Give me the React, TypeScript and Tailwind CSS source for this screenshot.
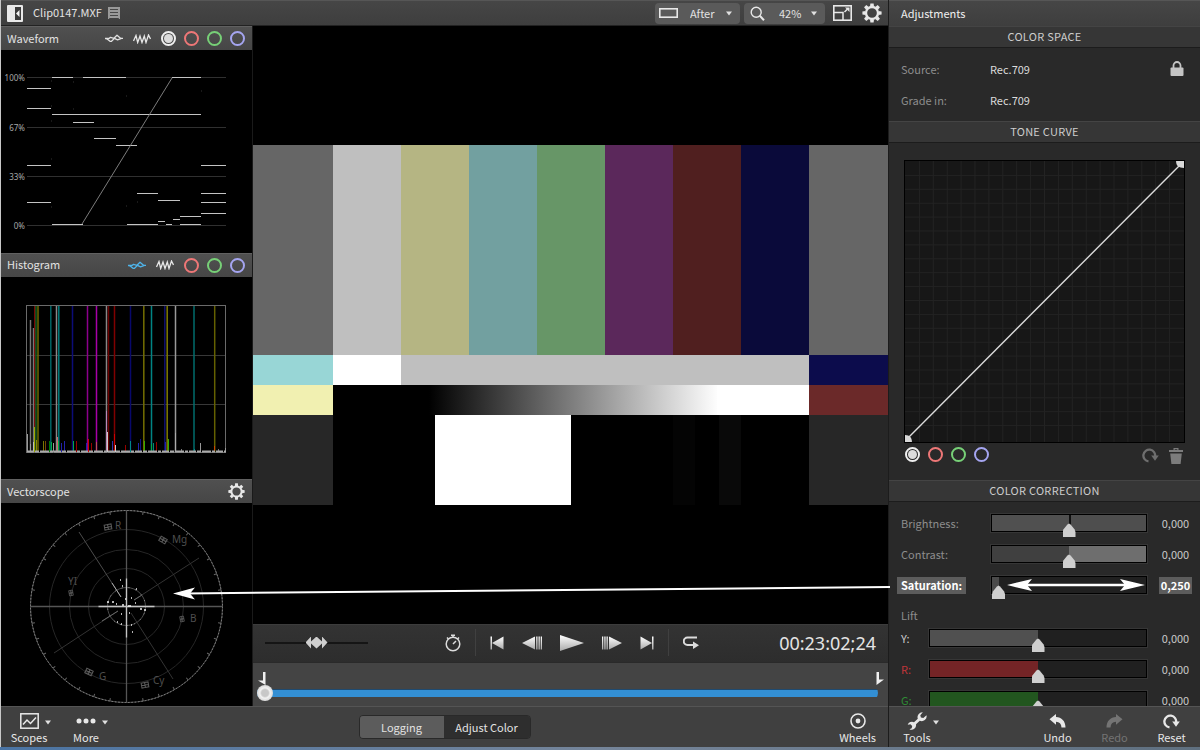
import React from "react";

type Rgb = "red" | "green" | "blue";

/* ---------- icons ---------- */

const PanelIcon = () => (
  <svg width="16" height="17" viewBox="0 0 16 17" aria-hidden="true">
    <rect width="16" height="17" rx="1" fill="#e9e9e9" />
    <rect x="8" y="2" width="6" height="13" fill="#3c3c3c" />
    <path d="M12.500 5v7L9 8.500z" fill="#f4f4f4" />
  </svg>
);

const ClipIcon = () => (
  <svg width="12" height="12" viewBox="0 0 12 12" aria-hidden="true">
    <path d="M0 0h12v12h-1.200v-1H1.200v1H0z" fill="#999" />
    <path d="M2 2.500h8M2 5.500h8M2 8.500h8" stroke="#484848" strokeWidth="1.200" />
  </svg>
);

const LoopIcon = ({ color }: { color: string }) => (
  <svg width="18" height="9" viewBox="0 0 18 9" aria-hidden="true" fill="none" stroke={color} strokeWidth="1.300" strokeLinejoin="round">
    <path d="M0 4.500H4L5.500 3.300L9 4.300L12 1.200L15.500 4.300H18" />
    <path d="M1.500 4.500L5 7.300H6.500L9.500 4.400L12.500 5.800L16.500 4.300" />
  </svg>
);

const ZigzagIcon = () => (
  <svg width="18" height="10" viewBox="0 0 18 10" aria-hidden="true">
    <path d="M0.500 7L3 1.500L4.700 8.500L7 2L9 8.500L11.300 2L13 8.500L15.500 1L17.500 5" fill="none" stroke="#e6e6e6" strokeWidth="1.300" />
  </svg>
);

const GearIcon = ({ size }: { size: number }) => (
  <svg width={size} height={size} viewBox="-10 -10 20 20" aria-hidden="true">
    <circle r="6" fill="none" stroke="#e8e8e8" strokeWidth="2.300" />
    {[0, 45, 90, 135, 180, 225, 270, 315].map((a) => (
      <path key={a} d="M-2 -6.500L-1.600 -9.600H1.600L2 -6.500z" fill="#e8e8e8" transform={`rotate(${a})`} />
    ))}
  </svg>
);

const Caret = () => (
  <svg width="6" height="5" viewBox="0 0 6 5" aria-hidden="true" className="pointer-events-none shrink-0">
    <path d="M0 0.500h6L3 4.500z" fill="#e0e0e0" />
  </svg>
);

const WrenchIcon = () => (
  <svg width="20" height="18" viewBox="0 0 20 18" aria-hidden="true">
    <path
      d="M15.800 0.300a4.900 4.900 0 0 0-5 6.500L7 10.200a4.600 4.600 0 0 0-6.300 2.600l2.700-.6 1.800 1.700-.5 2.300-2.200 1a4.600 4.600 0 0 0 6.500-5l3.800-3.400a4.900 4.900 0 0 0 6.700-5.500L16.300 6l-2.400-.5-.6-2.300z"
      fill="#e8e8e8"
    />
  </svg>
);

const UndoIcon = () => (
  <svg width="17" height="14" viewBox="0 0 17 14" aria-hidden="true">
    <path d="M7 0v3C12.500 3.200 16.500 7 16.500 13.500h-4C12.300 9.800 10.500 8 7 7.700v3.100L0.500 5.300z" fill="currentColor" />
  </svg>
);

const ResetIcon = () => (
  <svg width="17" height="15" viewBox="0 0 17 15" aria-hidden="true">
    <path d="M6.500 13.400A5.900 5.900 0 1 1 13.100 8.500" fill="none" stroke="currentColor" strokeWidth="2.300" />
    <path d="M9.200 7.500H16.800L13 12.800z" fill="currentColor" />
  </svg>
);

const TrashIcon = () => (
  <svg width="14" height="17" viewBox="0 0 14 17" aria-hidden="true">
    <path d="M0 3h14v2H0zM4.500 3.500V1h5v2.500H8.300V2.200H5.700v1.300zM1.200 6.500h11.600L11.600 17H2.400z" fill="#7c7c7c" />
  </svg>
);

const LockIcon = () => (
  <svg width="14" height="15" viewBox="0 0 14 15" aria-hidden="true">
    <path d="M3.500 7V4.500a3.500 3.500 0 0 1 7 0V7" fill="none" stroke="#c4c4c4" strokeWidth="1.800" />
    <rect x="0.500" y="6.500" width="13" height="8.500" rx="1" fill="#c4c4c4" />
  </svg>
);

const ringColor: Record<Rgb, string> = { red: "border-[#ee7777]", green: "border-[#77d077]", blue: "border-[#a5a5f0]" };

function Ring({ color }: { color: Rgb }) {
  return <button aria-label={`${color} channel`} className={`size-[15px] shrink-0 rounded-full border-2 ${ringColor[color]}`} />;
}

function LumaRing() {
  return (
    <button aria-label="luma channel" className="flex size-[15px] shrink-0 items-center justify-center rounded-full border-2 border-[#efefef]">
      <span className="size-[9px] rounded-full bg-[#dcdcdc]" />
    </button>
  );
}

/* ---------- scopes ---------- */

function Scope({ title, tools, children }: { title: string; tools: React.ReactNode; children: React.ReactNode }) {
  return (
    <section className="flex min-h-0 flex-1 flex-col">
      <header className="flex h-6 shrink-0 items-center justify-between border-t border-[#606060] bg-linear-to-b from-[#505050] to-[#464646] pr-[7px] pl-1.5">
        <h2 className="pb-0.5">{title}</h2>
        <div className="flex items-center gap-2">{tools}</div>
      </header>
      <div className="min-h-0 flex-1 bg-black">{children}</div>
    </section>
  );
}

function TraceButtons({ loopColor }: { loopColor: string }) {
  return (
    <div className="mr-0.5 flex items-center gap-2.5">
      <button aria-label="Overlay traces"><LoopIcon color={loopColor} /></button>
      <button aria-label="Single trace"><ZigzagIcon /></button>
    </div>
  );
}

const waveLevels: [number, number, number][] = [
  [27, 51, 88], [27, 51, 108], [27, 51, 165], [27, 51, 202],
  [52, 73, 77], [83, 126, 77], [172, 201, 77], [52, 201, 114],
  [73, 94, 122], [94, 116, 138], [116, 137, 145],
  [52, 83, 224], [127, 158, 224], [158, 165, 221], [166, 172, 224], [173, 180, 219],
  [180, 201, 216], [180, 201, 224], [137, 158, 193], [158, 180, 200],
  [201, 226, 165], [201, 226, 193], [201, 226, 202], [201, 226, 213],
];

function Waveform() {
  return (
    <svg viewBox="1 50 251 202" preserveAspectRatio="xMidYMin" className="h-full w-full font-['Noto_Sans',sans-serif]" role="img" aria-label="Waveform scope">
      {[["100%", 77], ["67%", 127], ["33%", 176], ["0%", 225]].map(([label, y]) => (
        <g key={label}>
          <text x="25" y={Number(y) + 4} textAnchor="end" fontSize="8" fill="#a8a8a8">{label}</text>
          <path d={`M27 ${Number(y) + 0.5}H226`} stroke="#303030" />
        </g>
      ))}
      {waveLevels.map(([a, b, y], i) => (
        <path key={i} d={`M${a} ${y + 0.5}H${b}`} stroke="#c4c4c4" />
      ))}
      <path d="M82 224L172 78" stroke="#8a8a8a" strokeWidth="0.900" />
      <path d="M51 81h1M73 82h1M51 106h1M73 109h1M126 96h1M51 121h1M51 159h1M137 202h1M126 206h1M201 91h1M51 207h1" stroke="#333" />
    </svg>
  );
}

const histLines: [number, string, number][] = [
  [30, "#777", 320], [33, "#777", 328], [34.500, "#a00808", 305], [35.500, "#0a5a20", 305], [37.500, "#6c6800", 305],
  [50.300, "#006464", 305], [56, "#888", 305], [58.300, "#007c7c", 305], [72, "#0c0c78", 305], [87, "#8c008c", 305],
  [96, "#a800a8", 305], [106, "#888", 305], [108, "#6a0000", 305], [114, "#800000", 305], [130, "#08086c", 305],
  [143.300, "#746f00", 305], [151, "#008484", 305], [164.300, "#101070", 305], [166.700, "#807c00", 305], [175, "#999", 305],
  [193.500, "#006c6c", 305], [214.200, "#646000", 305],
];

const histSpikes: [number, number, string][] = [
  [27, 434, "#999"], [30, 444, "#999"], [33, 442, "#bbb"], [34, 427, "#9a0"], [36, 440, "#880"], [43, 441, "#770"], [45, 441, "#740"],
  [49, 441, "#070"], [51, 442, "#0a4"], [53, 443, "#999"], [57, 437, "#c66"], [58, 441, "#0a4"], [61, 443, "#22a"], [64, 441, "#22a"],
  [73, 441, "#0a4"], [76, 441, "#900"], [86, 443, "#22a"], [88, 439, "#c00"], [91, 443, "#900"], [96, 442, "#b55"],
  [106, 411, "#b8b"], [107, 432, "#ccc"], [112, 441, "#33a"], [114, 434, "#c00"], [115, 445, "#ccc"], [125, 445, "#900"],
  [130, 441, "#088"], [138, 443, "#22a"], [140, 439, "#118"], [144, 441, "#3a0"], [151, 444, "#0a4"], [153, 443, "#087"],
  [156, 442, "#900"], [165, 442, "#22a"], [168, 439, "#3a0"], [175, 433, "#aaa"], [181, 449, "#777"], [194, 449, "#088"],
  [200, 443, "#999"], [214, 446, "#c40"], [218, 449, "#777"], [225, 448, "#999"],
];

function Histogram() {
  return (
    <svg viewBox="1 277 251 202" preserveAspectRatio="xMidYMin" className="h-full w-full" role="img" aria-label="Histogram scope">
      <path d="M27 355.500H226M27 404.500H226" stroke="#383838" />
      {histLines.map(([x, c, y]) => (
        <path key={x} d={`M${x + 0.5} ${y}V452`} stroke={c} strokeWidth="1.500" />
      ))}
      <rect x="26.500" y="305.500" width="199" height="147" fill="none" stroke="#6a6a6a" />
      {histSpikes.map(([x, y, c]) => (
        <path key={x} d={`M${x + 0.5} ${y}V452`} stroke={c} />
      ))}
      <path d="M27 451.500H226" stroke="#aaa" strokeWidth="2" strokeDasharray="7 1 4 1 9 1 3 1" />
    </svg>
  );
}

const ticks = Array.from({ length: 36 }, (_, i) => i * 10);
const targets: [number, number, number, string, number, number][] = [
  [108, 527, -10, "R", 115, 529], [163, 540, 30, "Mg", 172, 543], [71, 593, 80, "YI", 68, 585],
  [182, 619, 80, "B", 190, 622], [89, 672, 25, "G", 99, 680], [145, 685, -10, "Cy", 153, 684],
];

function Vectorscope() {
  return (
    <svg viewBox="1 503 251 202" preserveAspectRatio="xMidYMin" className="h-full w-full font-['Noto_Sans',sans-serif]" role="img" aria-label="Vectorscope">
      <g fill="none" transform="translate(126.500 606.500)">
        <circle r="96" stroke="#484848" />
        <circle r="96" stroke="#8a8a8a" strokeDasharray="1.500 1.850" />
        {ticks.map((a) => (
          <path key={a} d="M0 -96V-93" stroke="#666" transform={`rotate(${a})`} />
        ))}
        {[77, 57, 38].map((r) => (
          <circle key={r} r={r} stroke="#262626" />
        ))}
        <circle r="19" stroke="#4c4c4c" />
        <circle r="19" stroke="#999" strokeDasharray="1 6" />
        <path d="M-96 0H96M0 -96V96" stroke="#555" strokeWidth="1.300" />
        <path d="M-28 0H28M0 -28V31" stroke="#c4c4c4" strokeWidth="1.300" />
      </g>
      <path d="M199 558L134 600M54 653L118 611M173 679L131 613" stroke="#333" />
      <path d="M79 532L121 597" stroke="#4c4c4c" />
      <path d="M112 583L121 597" stroke="#aaa" />
      <path d="M118 611L102 621M142 595L134 600" stroke="#666" />
      <path
        d="M120 580h1M122 586h1M107 602h2M112 602h2M116 604h1M122 605h2M131 598h1M135 603h1M140 609h2M144 610h2M117 622h1M121 624h1M131 625h1M132 632h1M136 589h1M121 614h1M129 613h1M125 599h1M128 606h3"
        stroke="#eee"
        strokeWidth="1.300"
      />
      {targets.map(([x, y, r, label, tx, ty]) => (
        <g key={label}>
          <path d="M-3.500 -2.500H0V2.500H-3.500zM0 -2.500H3.500V2.500H0zM-3.500 0H3.500" fill="none" stroke="#5c5c5c" transform={`translate(${x} ${y}) rotate(${r}) scale(${r === 80 ? 0.75 : 1})`} />
          <text x={tx} y={ty} fontSize="10" fill="#4e4e4e">{label}</text>
        </g>
      ))}
    </svg>
  );
}

/* ---------- viewer ---------- */

function ColorBars() {
  const bars = ["#bfbfbf", "#b5b583", "#72a0a0", "#679667", "#5b285b", "#501f1f", "#0a0a3a"];
  return (
    <svg viewBox="0 0 635 360" preserveAspectRatio="none" className="block h-[360px] w-full" shapeRendering="crispEdges" role="img" aria-label="Color bars">
      <defs>
        <linearGradient id="ramp">
          <stop offset="0" stopColor="#000" />
          <stop offset="1" stopColor="#fff" />
        </linearGradient>
      </defs>
      <rect width="635" height="360" fill="#000" />
      <rect width="635" height="210" fill="#666" />
      {bars.map((c, i) => (
        <rect key={c} x={80 + i * 68} width="68" height="210" fill={c} />
      ))}
      <rect y="210" width="80" height="30" fill="#98d6d6" />
      <rect x="80" y="210" width="68" height="30" fill="#fff" />
      <rect x="148" y="210" width="408" height="30" fill="#bfbfbf" />
      <rect x="556" y="210" width="79" height="30" fill="#0c0c4c" />
      <rect y="240" width="80" height="30" fill="#f1f0b1" />
      <rect x="176" y="240" width="290" height="30" fill="url(#ramp)" />
      <rect x="464" y="240" width="92" height="30" fill="#fff" />
      <rect x="556" y="240" width="79" height="30" fill="#6b2929" />
      <rect y="270" width="80" height="90" fill="#272727" />
      <rect x="556" y="270" width="79" height="90" fill="#272727" />
      <rect x="182" y="270" width="136" height="90" fill="#fff" />
      <rect x="420" y="270" width="22" height="90" fill="#040404" />
      <rect x="466" y="270" width="22" height="90" fill="#090909" />
    </svg>
  );
}

function Transport() {
  return (
    <div className="flex h-[38px] shrink-0 items-center border-t border-[#3c3c3c] bg-linear-to-b from-[#333] to-[#2d2d2d] px-3 pb-0.5 text-[#e4e4e4]">
      <input
        type="range"
        aria-label="Shuttle"
        defaultValue={50}
        className="h-3 w-[103px] appearance-none bg-[linear-gradient(#151515,#151515)] bg-[length:100%_2px] bg-center bg-no-repeat [&::-webkit-slider-thumb]:h-3 [&::-webkit-slider-thumb]:w-[22px] [&::-webkit-slider-thumb]:appearance-none [&::-webkit-slider-thumb]:bg-[#cfcfcf] [&::-webkit-slider-thumb]:[clip-path:polygon(0_50%,25%_0,25%_42%,50%_0,75%_42%,75%_0,100%_50%,75%_100%,75%_58%,50%_100%,25%_58%,25%_100%)]"
      />
      <div className="flex flex-1 items-center justify-center pr-0.5">
        <button aria-label="Timer" className="mr-3.5">
          <svg width="16" height="18" viewBox="0 0 16 18" fill="none" stroke="#dcdcdc">
            <circle cx="8" cy="10" r="6.800" strokeWidth="1.500" />
            <path d="M6 1.200h4M8 1.500v2M2 3.500l1.500 1.500M14 3.500l-1.500 1.500M8 10l3-3" strokeWidth="1.500" />
          </svg>
        </button>
        <div className="flex h-[27px] items-center gap-[18px] border-x border-[#404040] px-3.5">
          <svg width="0" height="0" className="absolute" aria-hidden="true">
            <linearGradient id="metal" x2="0" y2="1">
              <stop offset="0" stopColor="#fff" />
              <stop offset="1" stopColor="#aaa" />
            </linearGradient>
          </svg>
          <button aria-label="Go to start">
            <svg width="14" height="14" viewBox="0 0 14 14" fill="url(#metal)"><path d="M0.500 0.500H2V13.500H0.500zM13.500 0.500V13.500L2 7z" /></svg>
          </button>
          <button aria-label="Step back">
            <svg width="20" height="14" viewBox="0 0 20 14" fill="url(#metal)"><path d="M13 0.500V13.500L0 7zM14.200 0.500h1.300v13h-1.300zM16.500 0.500h1.300v13h-1.300zM18.700 0.500H20v13h-1.300z" /></svg>
          </button>
          <button aria-label="Play">
            <svg width="24" height="16" viewBox="0 0 24 16" fill="url(#metal)"><path d="M0 0L24 8L0 16z" /></svg>
          </button>
          <button aria-label="Step forward">
            <svg width="20" height="14" viewBox="0 0 20 14" fill="url(#metal)"><path d="M7 0.500V13.500L20 7zM0 0.500h1.300v13H0zM2.300 0.500h1.300v13H2.300zM4.500 0.500h1.300v13H4.500z" /></svg>
          </button>
          <button aria-label="Go to end">
            <svg width="14" height="14" viewBox="0 0 14 14" fill="url(#metal)"><path d="M13.500 0.500H12V13.500h1.500zM0.500 0.500V13.500L12 7z" /></svg>
          </button>
        </div>
        <button aria-label="Loop" className="ml-3.5">
          <svg width="17" height="13" viewBox="0 0 17 13">
            <path d="M14 1.500H4.500a3.400 3.400 0 0 0 0 7.500H11" fill="none" stroke="#dcdcdc" strokeWidth="2" />
            <path d="M10 5.500L16 9.200L10 13z" fill="#dcdcdc" />
          </svg>
        </button>
      </div>
      <output className="font-['Noto_Sans',sans-serif] text-lg leading-6">00:23:02;24</output>
    </div>
  );
}

function Timeline() {
  return (
    <div className="flex h-[44px] shrink-0 flex-col border-t border-[#2a2a2a] bg-[#444] px-1 pt-2">
      <div className="flex justify-between">
        <svg width="9" height="14" viewBox="0 0 9 14" aria-hidden="true"><path d="M6 1h2.500v13L1 9.500h5z" fill="#f0f0f0" /></svg>
        <svg width="9" height="14" viewBox="0 0 9 14" aria-hidden="true"><path d="M1.500 1H4v7.500h5L1.500 14z" fill="#f0f0f0" /></svg>
      </div>
      <div className="pr-1.5">
        <input
          type="range"
          aria-label="Playhead"
          defaultValue={0}
          className="block h-4 w-full appearance-none rounded-full bg-[linear-gradient(#1e4a70_1px,#338fd4_1px)] bg-[length:100%_8px] bg-center bg-no-repeat [&::-webkit-slider-thumb]:size-4 [&::-webkit-slider-thumb]:appearance-none [&::-webkit-slider-thumb]:rounded-full [&::-webkit-slider-thumb]:bg-[radial-gradient(circle,#c8c8c8_30%,#f2f2f2_45%,#bbb)]"
        />
      </div>
    </div>
  );
}

/* ---------- adjustments ---------- */

function SectionTitle({ children }: { children: React.ReactNode }) {
  return (
    <h3 className="flex h-[22px] shrink-0 items-center justify-center border-y border-t-[#444] border-b-[#1c1c1c] bg-[#363636] pb-0.5 tracking-wide text-[#cdcdcd]">
      {children}
    </h3>
  );
}

const thumb =
  "[&::-webkit-slider-thumb]:h-[14px] [&::-webkit-slider-thumb]:w-[13px] [&::-webkit-slider-thumb]:translate-y-[7px] [&::-webkit-slider-thumb]:appearance-none [&::-webkit-slider-thumb]:bg-[#cfcfcf] [&::-webkit-slider-thumb]:[clip-path:polygon(50%_0,62%_8%,92%_42%,100%_60%,100%_92%,93%_100%,7%_100%,0_92%,0_60%,8%_42%,38%_8%)]";

function Slider({ id, label, value, position = 50, track, wide, tone, active }: {
  id: string; label: string; value: string; position?: number; track: string; wide?: boolean; tone: string; active?: boolean;
}) {
  return (
    <div className="flex h-[31px] shrink-0 items-center leading-3">
      <div className={wide ? "w-7 shrink-0" : "w-[90px] shrink-0"}>
        <label htmlFor={id} className={active ? "-ml-1 inline-block bg-[#5c5c5c] px-1 leading-[17px] font-bold text-white" : `block ${tone}`}>
          {label}
        </label>
      </div>
      <div className="relative flex min-w-0 flex-1">
        <input id={id} type="range" defaultValue={position} className={`h-[18px] w-full appearance-none border border-black outline outline-[#363636] ${track} ${thumb}`} />
        {active && (
          <svg viewBox="0 0 138 14" className="pointer-events-none absolute top-0.5 right-0.5 h-3.5 w-[138px]" aria-hidden="true">
            <path d="M10 7H128" stroke="#fff" strokeWidth="2.500" />
            <path d="M0 7L25 1L20 7L25 13zM138 7L113 1L118 7L113 13z" fill="#fff" />
          </svg>
        )}
      </div>
      <output htmlFor={id} className={active ? "ml-3 w-[33px] bg-[#5c5c5c] text-center leading-[17px] font-bold text-white" : "ml-3 w-[33px] text-center text-[#c9c9c9]"}>
        {value}
      </output>
    </div>
  );
}

function ToneCurve() {
  const lines = Array.from({ length: 19 }, (_, i) => (i + 1) * 14);
  return (
    <svg viewBox="0 0 281 283" className="block w-full border border-black bg-[#171717]" role="img" aria-label="Tone curve">
      {lines.map((n) => (
        <path key={n} d={`M${n + 0.5} 0V283M0 ${n + 0.5}H281`} stroke="#232323" />
      ))}
      <path d="M2 280L279 2" stroke="#dcdcdc" strokeWidth="1.400" />
      <path d="M273 0H281V7C276 7 273 5 273 0zM0 276C5 276 7 279 7 283H0z" fill="#d8d8d8" />
    </svg>
  );
}

function Adjustments() {
  return (
    <aside className="flex w-[312px] shrink-0 flex-col border-l border-[#1c1c1c] bg-[#292929]">
      <header className="flex h-[26px] shrink-0 items-center border-t border-[#565656] bg-linear-to-b from-[#464646] to-[#3e3e3e] px-3 pb-0.5">
        <h2 className="text-[#f0f0f0]">Adjustments</h2>
      </header>
      <div className="flex min-h-0 flex-1 flex-col overflow-hidden">
        <SectionTitle>COLOR SPACE</SectionTitle>
        <dl className="grid shrink-0 auto-rows-[31px] grid-cols-[89px_1fr_auto] items-center px-3 pt-[5px] pb-1.5">
          <dt className="text-[#8d8d8d]">Source:</dt>
          <dd className="text-[#dcdcdc]">Rec.709</dd>
          <dd className="pr-1"><LockIcon /></dd>
          <dt className="text-[#8d8d8d]">Grade in:</dt>
          <dd className="col-span-2 text-[#dcdcdc]">Rec.709</dd>
        </dl>
        <SectionTitle>TONE CURVE</SectionTitle>
        <div className="shrink-0 px-[15px] pt-[17px]">
          <ToneCurve />
          <div className="flex h-[37px] items-start justify-between pt-1">
            <div className="flex gap-2 pl-px">
              <LumaRing />
              <Ring color="red" />
              <Ring color="green" />
              <Ring color="blue" />
            </div>
            <div className="flex items-center gap-2.5 pr-0.5 text-[#6e6e6e]">
              <button aria-label="Reset curve"><ResetIcon /></button>
              <button aria-label="Delete curve"><TrashIcon /></button>
            </div>
          </div>
        </div>
        <SectionTitle>COLOR CORRECTION</SectionTitle>
        <div className="flex flex-col pt-1.5 pr-2 pl-3">
          <Slider id="brightness" label="Brightness:" value="0,000" tone="text-[#8d8d8d]" track="bg-[linear-gradient(90deg,#505050_50%,#111_50%,#111_51%,#4e4e4e_51%)]" />
          <Slider id="contrast" label="Contrast:" value="0,000" tone="text-[#8d8d8d]" track="bg-[linear-gradient(90deg,#404040_50%,#6e6e6e_50%)]" />
          <Slider id="saturation" label="Saturation:" value="0,250" position={0} active tone="" track="bg-[linear-gradient(90deg,#4a4a4a_7px,#202020_7px)]" />
          <p className="h-[22px] shrink-0 pt-1.5 text-[#8d8d8d]">Lift</p>
          <Slider id="lift-y" label="Y:" value="0,000" wide tone="text-[#c9c9c9]" track="bg-[linear-gradient(90deg,#505050_50%,#202020_50%)]" />
          <Slider id="lift-r" label="R:" value="0,000" wide tone="text-[#c0353a]" track="bg-[linear-gradient(90deg,#742426_50%,#202020_50%)]" />
          <Slider id="lift-g" label="G:" value="0,000" wide tone="text-[#2f8a35]" track="bg-[linear-gradient(90deg,#22561f_50%,#202020_50%)]" />
        </div>
      </div>
      <footer className="flex h-[41px] shrink-0 items-center border-t border-[#545454] bg-[#404040] pt-0.5 pl-3">
        <ToolButton label="Tools" menu><WrenchIcon /></ToolButton>
        <div className="ml-auto flex">
          <div className="flex w-[57px] justify-center"><ToolButton label="Undo"><UndoIcon /></ToolButton></div>
          <div className="flex w-[57px] justify-center">
            <ToolButton label="Redo" disabled><span className="-scale-x-100"><UndoIcon /></span></ToolButton>
          </div>
          <div className="flex w-[57px] justify-center"><ToolButton label="Reset"><ResetIcon /></ToolButton></div>
        </div>
      </footer>
    </aside>
  );
}

function ToolButton({ label, menu, disabled, children }: { label: string; menu?: boolean; disabled?: boolean; children: React.ReactNode }) {
  return (
    <button disabled={disabled} className="flex items-start text-[#e8e8e8] disabled:text-[#747474]">
      <span className={menu ? "flex w-8 flex-col items-center" : "flex flex-col items-center"}>
        <span className="flex h-[18px] items-center">{children}</span>
        <span className="leading-[14px]">{label}</span>
      </span>
      {menu && <span className="pt-2"><Caret /></span>}
    </button>
  );
}

/* ---------- page ---------- */

export default function App() {
  return (
    <div className="relative flex h-screen min-h-[600px] flex-col overflow-hidden bg-black font-['Noto_Sans_CJK_SC','Noto_Sans',sans-serif] text-[11px] leading-4 text-[#e2e2e2]">
      <div className="flex min-h-0 flex-1 border-l border-[#c8c8c8]">
        <div className="flex min-w-0 flex-1 flex-col">
          <header className="flex h-[26px] shrink-0 items-center border-t border-b border-t-[#565656] border-b-[#222] bg-linear-to-b from-[#464646] to-[#3e3e3e] pl-1.5">
            <button aria-label="Toggle browser"><PanelIcon /></button>
            <h1 className="ml-2.5 pb-0.5">Clip0147.MXF</h1>
            <button aria-label="Clip details" className="ml-1.5"><ClipIcon /></button>
            <div className="ml-auto flex items-center pr-1.5">
              <label className="flex h-[21px] w-[85px] items-center rounded-sm bg-[#5a5a5a] px-1">
                <svg width="19" height="10" viewBox="0 0 19 10" aria-hidden="true"><rect x="0.800" y="0.800" width="17.400" height="8.400" fill="none" stroke="#e8e8e8" strokeWidth="1.600" /></svg>
                <select aria-label="View" className="ml-3 min-w-0 flex-1 appearance-none bg-transparent">
                  <option>After</option>
                </select>
                <span className="pr-1"><Caret /></span>
              </label>
              <label className="ml-1 flex h-[21px] w-[81px] items-center rounded-sm bg-[#5a5a5a] px-1.5">
                <svg width="15" height="15" viewBox="0 0 15 15" fill="none" stroke="#e8e8e8" aria-hidden="true"><circle cx="6.200" cy="6.200" r="5" strokeWidth="1.400" /><path d="M9.800 9.800l4.200 4.400" strokeWidth="2" /></svg>
                <select aria-label="Zoom" className="ml-3.5 min-w-0 flex-1 appearance-none bg-transparent">
                  <option>42%</option>
                </select>
                <span className="pr-0.5"><Caret /></span>
              </label>
              <button aria-label="Full screen" className="ml-2">
                <svg width="19" height="16" viewBox="0 0 19 16" fill="none" stroke="#e8e8e8" aria-hidden="true">
                  <rect x="0.800" y="0.800" width="17.400" height="14.400" strokeWidth="1.600" />
                  <path d="M1 7.500h9V15M11.500 7l3-3" strokeWidth="1.500" />
                  <path d="M12 2.500h4.500V7z" fill="#e8e8e8" stroke="none" />
                </svg>
              </button>
              <button aria-label="Settings" className="ml-2.5"><GearIcon size={20} /></button>
            </div>
          </header>

          <div className="flex min-h-0 flex-1">
            <div className="flex w-[252px] shrink-0 flex-col border-r border-[#1a1a1a]">
              <Scope
                title="Waveform"
                tools={<><TraceButtons loopColor="#e0e0e0" /><LumaRing /><Ring color="red" /><Ring color="green" /><Ring color="blue" /></>}
              >
                <Waveform />
              </Scope>
              <Scope title="Histogram" tools={<><TraceButtons loopColor="#4fb4ea" /><Ring color="red" /><Ring color="green" /><Ring color="blue" /></>}>
                <Histogram />
              </Scope>
              <Scope title="Vectorscope" tools={<button aria-label="Vectorscope settings"><GearIcon size={17} /></button>}>
                <Vectorscope />
              </Scope>
            </div>

            <main className="flex min-w-0 flex-1 flex-col">
              <div className="flex min-h-0 flex-1 flex-col justify-center overflow-hidden bg-black">
                <ColorBars />
              </div>
              <Transport />
              <Timeline />
            </main>
          </div>

          <footer className="grid h-[41px] shrink-0 grid-cols-[1fr_auto_1fr] items-center border-t border-[#545454] bg-[#404040] px-3">
            <div className="flex gap-[19px] pt-0.5">
              <ToolButton label="Scopes" menu>
                <svg width="19" height="16" viewBox="0 0 19 16" fill="none" stroke="#e8e8e8" aria-hidden="true">
                  <rect x="0.800" y="0.800" width="17.400" height="14.400" strokeWidth="1.500" />
                  <path d="M3 11.500l4-4.500 3.500 3.500L16 4.500" strokeWidth="1.500" />
                </svg>
              </ToolButton>
              <ToolButton label="More" menu>
                <svg width="20" height="6" viewBox="0 0 20 6" fill="#e8e8e8" aria-hidden="true"><circle cx="3" cy="3" r="2.500" /><circle cx="10" cy="3" r="2.500" /><circle cx="17" cy="3" r="2.500" /></svg>
              </ToolButton>
            </div>
            <div className="flex h-6 overflow-hidden rounded border border-[#292929]">
              <button className="w-[84px] bg-[#5c5c5c]">Logging</button>
              <button className="w-[86px] bg-[#2e2e2e]">Adjust Color</button>
            </div>
            <div className="flex justify-end pt-0.5">
              <ToolButton label="Wheels">
                <svg width="16" height="16" viewBox="0 0 16 16" aria-hidden="true"><circle cx="8" cy="8" r="7" fill="none" stroke="#e8e8e8" strokeWidth="1.600" /><circle cx="8" cy="8" r="2.400" fill="#e8e8e8" /></svg>
              </ToolButton>
            </div>
          </footer>
        </div>
        <Adjustments />
      </div>
      <div className="h-[3px] shrink-0 bg-linear-to-r from-[#4a74a4] via-[#75859a] to-[#5f7080]" />

      <svg viewBox="0 0 1200 750" preserveAspectRatio="none" className="pointer-events-none absolute inset-0 h-full w-full" aria-hidden="true">
        <path d="M185 593.500L890 587" stroke="#fff" strokeWidth="2" />
        <path d="M173 593.500L195 587.500L190 593.500L195 599.500z" fill="#fff" />
      </svg>
    </div>
  );
}
